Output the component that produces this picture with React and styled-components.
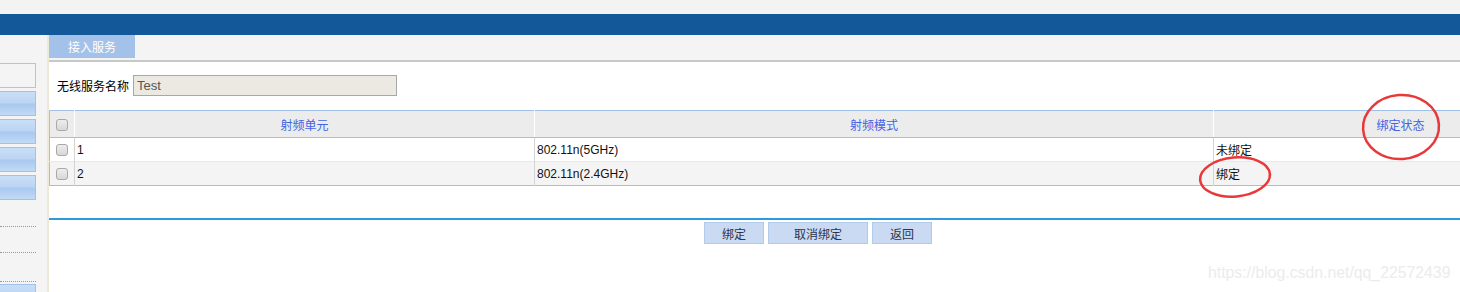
import React from 'react'
import styled, { createGlobalStyle } from 'styled-components'

const Global = createGlobalStyle`
  html, body {
    margin: 0;
    padding: 0;
    background: #fff;
    overflow: hidden;
  }
  body {
    font-family: "Liberation Sans", "Noto Sans CJK SC", sans-serif;
    font-size: 12px;
    color: #000;
  }
`

const Page = styled.div`
  position: relative;
  width: 1460px;
  height: 292px;
  overflow: hidden;
`

const TopStrip = styled.div`
  height: 14px;
  background: #f3f3f3;
`

const HeaderBar = styled.div`
  height: 21px;
  background: #135899;
`

const Body = styled.div`
  display: flex;
  height: 257px;
  overflow: hidden;
`

const Sidebar = styled.div`
  width: 47px;
  flex-shrink: 0;
  background: #f4f4f4;
  border-right: 2px solid #ece9d8;
  padding-top: 28px;
  display: flex;
  flex-direction: column;
  box-sizing: content-box;
  overflow: hidden;
`

const SideItem = styled.div`
  width: 36px;
  height: 25px;
  flex-shrink: 0;
  box-sizing: border-box;
  border: 1px solid ${p => (p.$plain ? '#a9c7ea' : '#9fc1ea')};
  border-left: none;
  margin-bottom: 3px;
  background: ${p =>
    p.$plain
      ? '#f4f4f4'
      : 'linear-gradient(#c9def7 0%, #bcd5f3 45%, #a9c9ef 55%, #c2daf5 100%)'};
`

const SideDots = styled.div`
  width: 36px;
  height: ${p => p.$h}px;
  flex-shrink: 0;
  border-bottom: 1px dotted #999;
  box-sizing: border-box;
`

const Main = styled.div`
  width: 1538px;
  flex-shrink: 0;
  display: flex;
  flex-direction: column;
`

const TabBar = styled.div`
  height: 25px;
  background: #f4f4f4;
  border-bottom: 2px solid #c8c8c8;
  display: flex;
  align-items: flex-start;
`

const Tab = styled.div`
  width: 86px;
  height: 23px;
  background: #a4c2e9;
  color: #fff;
  display: flex;
  align-items: center;
  justify-content: center;
  font-size: 12px;
`

const FormRow = styled.div`
  display: flex;
  align-items: center;
  gap: 4px;
  padding: 13px 8px 14px;
`

const Label = styled.span`
  font-size: 12px;
  color: #000;
`

const Input = styled.input`
  width: 264px;
  height: 21px;
  box-sizing: border-box;
  border: 1px solid #a8a8a8;
  background: #ebe9e1;
  color: #555;
  font-family: "Liberation Sans", "Noto Sans CJK SC", sans-serif;
  font-size: 13px;
  padding: 0 3px;
  margin: 0;
  outline: none;
`

const Table = styled.table`
  width: 1538px;
  border-collapse: collapse;
  table-layout: fixed;
  border-top: 1px solid #a0c0e8;
  border-bottom: 1px solid #a0c0e8;
  border-left: 1px solid #a0c0e8;
`

const Th = styled.th`
  height: 26px;
  padding: 0;
  background: #ececec;
  color: #4163e4;
  font-weight: normal;
  font-size: 12px;
  text-align: center;
  border-left: 1px solid #fff;
  border-bottom: 1px solid #a0c0e8;
  &:first-child { border-left: none; }
`

const Tr = styled.tr`
  background: ${p => (p.$alt ? '#f4f4f4' : '#fff')};
  border-top: ${p => (p.$alt ? '1px solid #e8e8e8' : 'none')};
`

const Td = styled.td`
  height: 23px;
  padding: 0 0 0 2px;
  font-size: 12px;
  color: #111;
  border-left: 1px solid #d4d4d4;
  text-align: left;
  vertical-align: middle;
  &:first-child { border-left: none; padding: 0; text-align: center; }
`

const Check = styled.span`
  display: inline-block;
  width: 12px;
  height: 12px;
  box-sizing: border-box;
  border: 1px solid #a9a9a9;
  border-radius: 3px;
  background: linear-gradient(#ededed, #d8d8d8);
  vertical-align: middle;
  margin-left: -1px;
`

const Divider = styled.div`
  margin-top: 32px;
  height: 2px;
  background: #2f9ad9;
`

const ButtonRow = styled.div`
  display: flex;
  justify-content: center;
  gap: 4px;
  margin-top: 2px;
`

const Button = styled.button`
  width: ${p => p.$w}px;
  height: 22px;
  box-sizing: border-box;
  border: 1px solid #b3cbea;
  background: #c9daf2;
  color: #2d3450;
  font-family: "Liberation Sans", "Noto Sans CJK SC", sans-serif;
  font-size: 12px;
  padding: 0;
  margin: 0;
`

const Watermark = styled.div`
  position: absolute;
  left: 1208px;
  top: 264px;
  font-size: 15.8px;
  color: #ececec;
  white-space: nowrap;
`

const Marks = styled.svg`
  position: absolute;
  left: 0;
  top: 0;
  pointer-events: none;
`

const rows = [
  { id: '1', mode: '802.11n(5GHz)', state: '未绑定' },
  { id: '2', mode: '802.11n(2.4GHz)', state: '绑定' },
]

const App = () => {
  return (
    <Page>
      <Global />
      <TopStrip />
      <HeaderBar />
      <Body>
        <Sidebar>
          <SideItem $plain />
          <SideItem />
          <SideItem />
          <SideItem />
          <SideItem />
          <SideDots $h={24} />
          <SideDots $h={26} />
          <SideDots $h={29} />
          <SideItem style={{ marginTop: 2 }} />
        </Sidebar>
        <Main>
          <TabBar>
            <Tab>接入服务</Tab>
          </TabBar>
          <FormRow>
            <Label>无线服务名称</Label>
            <Input defaultValue="Test" readOnly />
          </FormRow>
          <Table>
            <colgroup>
              <col style={{ width: 25 }} />
              <col style={{ width: 460 }} />
              <col style={{ width: 679 }} />
              <col />
            </colgroup>
            <thead>
              <tr>
                <Th><Check /></Th>
                <Th>射频单元</Th>
                <Th>射频模式</Th>
                <Th>绑定状态</Th>
              </tr>
            </thead>
            <tbody>
              {rows.map((r, i) => (
                <Tr key={r.id} $alt={i % 2 === 1}>
                  <Td><Check /></Td>
                  <Td>{r.id}</Td>
                  <Td>{r.mode}</Td>
                  <Td>{r.state}</Td>
                </Tr>
              ))}
            </tbody>
          </Table>
          <Divider />
          <ButtonRow>
            <Button $w={60}>绑定</Button>
            <Button $w={100}>取消绑定</Button>
            <Button $w={60}>返回</Button>
          </ButtonRow>
        </Main>
      </Body>
      <Watermark>https://blog.csdn.net/qq_22572439</Watermark>
      <Marks width="1460" height="292" viewBox="0 0 1460 292">
        <ellipse cx="1401" cy="127" rx="38" ry="32" fill="none" stroke="#e8383a" strokeWidth="2.5" transform="rotate(-4 1401 127)" />
        <ellipse cx="1235" cy="177" rx="35" ry="19.5" fill="none" stroke="#e8383a" strokeWidth="2.5" transform="rotate(-5 1235 177)" />
      </Marks>
    </Page>
  )
}

export default App
